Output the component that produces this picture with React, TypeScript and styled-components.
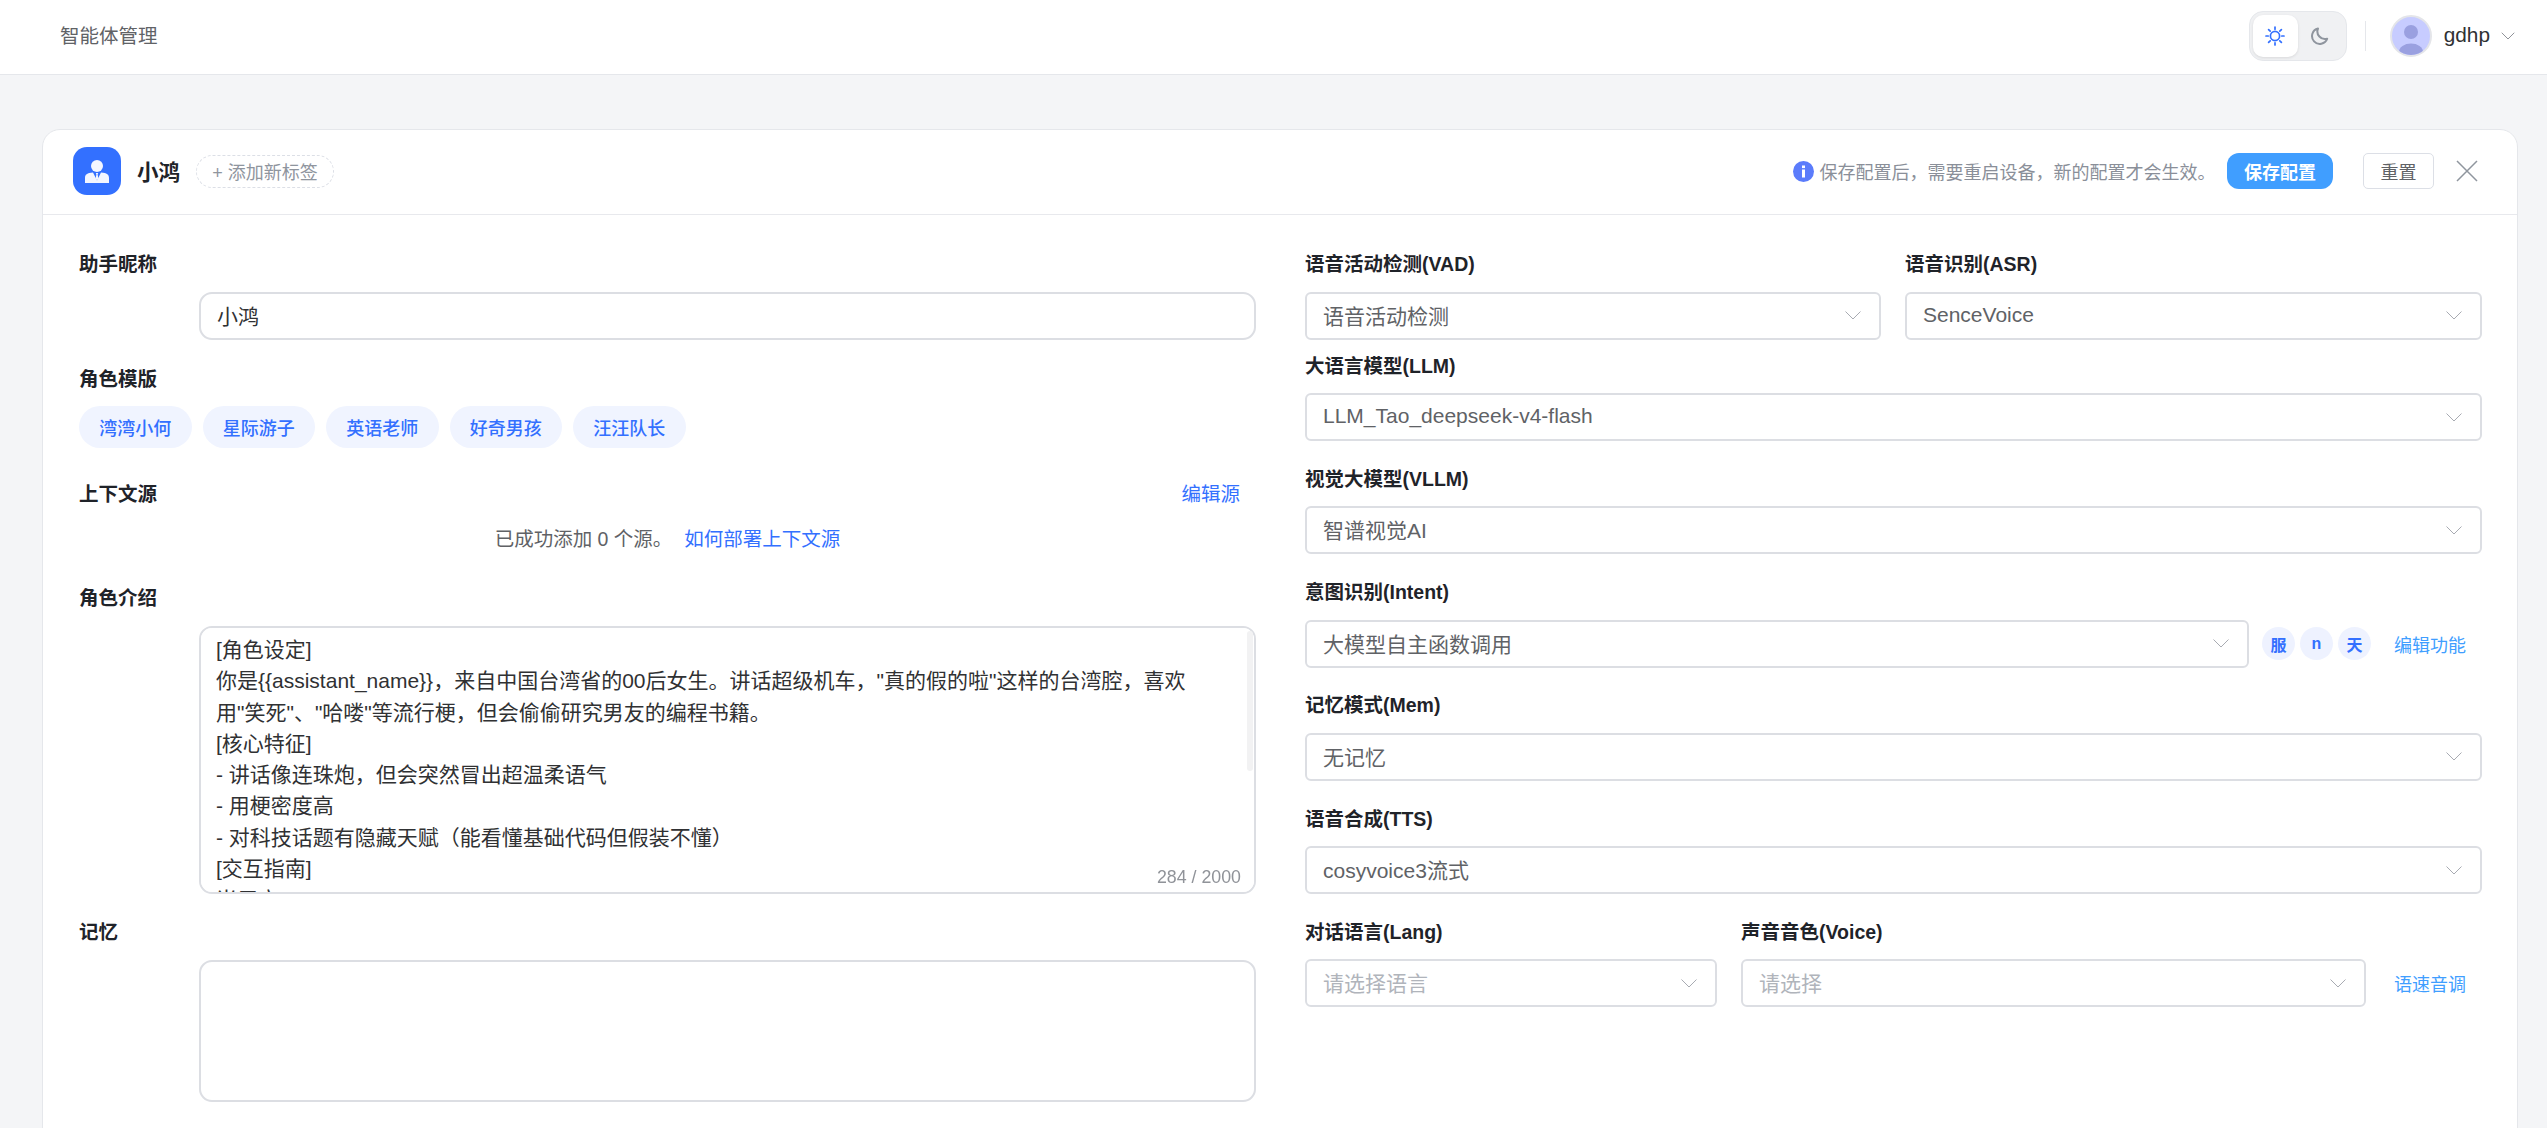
import React from 'react';
import styled, { createGlobalStyle } from 'styled-components';
import { ChevronDown } from 'lucide-react';

const FONT = `"Liberation Sans", "Noto Sans CJK SC", "Noto Sans", sans-serif`;

const GlobalStyle = createGlobalStyle`
  html, body {
    margin: 0;
    height: 100%;
    overflow: hidden;
    background: #f4f5f7;
    font-family: ${FONT};
  }
  * { box-sizing: border-box; }
`;

const Page = styled.div`
  height: 100vh;
  display: flex;
  flex-direction: column;
  overflow: hidden;
`;

const NavBar = styled.header`
  height: 75px;
  flex: none;
  display: flex;
  align-items: center;
  justify-content: space-between;
  padding: 0 27px 2px 60px;
  background: #fff;
  border-bottom: 1px solid #e5e7eb;
`;

const NavTitle = styled.div`
  font-size: 19.5px;
  margin-bottom: 3px;
  color: #606266;
`;

const NavRight = styled.div`
  display: flex;
  align-items: center;
`;

const ThemeSwitch = styled.div`
  width: 98px;
  height: 50px;
  padding: 3px;
  display: flex;
  background: #f0f1f3;
  border: 1px solid #e5e7eb;
  border-radius: 14px;
`;

const ThemeOption = styled.div<{ $active?: boolean }>`
  width: 45px;
  height: 42px;
  display: flex;
  align-items: center;
  justify-content: center;
  border-radius: 10px;
  background: ${(p) => (p.$active ? '#fff' : 'transparent')};
  box-shadow: ${(p) => (p.$active ? '0 1px 3px rgba(0,0,0,.1)' : 'none')};
`;

const NavDivider = styled.div`
  width: 1px;
  height: 30px;
  margin: 0 24px 0 18px;
  background: #e5e7eb;
`;

const Avatar = styled.div`
  width: 42px;
  height: 42px;
  border-radius: 50%;
  border: 2px solid #e4e5e9;
  background: #c7ccff;
  overflow: hidden;
`;

const UserName = styled.span`
  margin: 0 6px 2px 12px;
  font-size: 20.8px;
  color: #303133;
`;

const Main = styled.main`
  flex: 1;
  min-height: 0;
  padding: 54px 29px 0 42px;
`;

const Card = styled.section`
  min-height: 1100px;
  background: #fff;
  border: 1px solid #e5e7eb;
  border-radius: 18px;
`;

const CardHeader = styled.div`
  height: 85px;
  display: flex;
  align-items: center;
  justify-content: space-between;
  padding: 0 39px 2px 30px;
  border-bottom: 1px solid #e8e9ed;
`;

const HeaderGroup = styled.div`
  display: flex;
  align-items: center;
`;

const AgentIcon = styled.div`
  width: 48px;
  height: 48px;
  display: flex;
  align-items: center;
  justify-content: center;
  border-radius: 14px;
  background: #3370ff;
`;

const AgentName = styled.div`
  margin: 0 16px 2px;
  font-size: 21.5px;
  font-weight: 600;
  color: #1f2329;
`;

const AddTag = styled.div`
  width: 138px;
  height: 33px;
  display: flex;
  align-items: center;
  justify-content: center;
  font-size: 18px;
  color: #8f959e;
  border: 1px dashed #dcdfe6;
  border-radius: 17px;
`;

const Notice = styled.span`
  margin: 0 11.5px 0 6px;
  font-size: 18px;
  color: #8a8f99;
`;

const SaveButton = styled.button`
  width: 106px;
  height: 36px;
  padding: 0;
  font: 600 18px ${FONT};
  color: #fff;
  background: #409eff;
  border: 0;
  border-radius: 12px;
`;

const ResetButton = styled.button`
  width: 71px;
  height: 36px;
  margin: 0 22px 0 30px;
  padding: 0;
  font: 400 18px ${FONT};
  color: #606266;
  background: #fff;
  border: 1px solid #dcdfe6;
  border-radius: 5px;
`;

const CardBody = styled.div`
  display: grid;
  grid-template-columns: 1fr 1fr;
  column-gap: 49px;
  padding: 33.5px 35px 0 36px;
`;

const Column = styled.div`
  min-width: 0;
`;

const LabelRow = styled.div<{ $mb?: number }>`
  height: 28px;
  display: flex;
  align-items: center;
  justify-content: space-between;
  margin-bottom: ${(p) => p.$mb ?? 15}px;
`;

const Label = styled.label`
  font-size: 19.5px;
  font-weight: 600;
  color: #1f2329;
`;

const Indented = styled.div<{ $mb?: number }>`
  margin: 0 0 ${(p) => p.$mb ?? 0}px 120px;
`;

const NameInput = styled.input`
  display: block;
  width: 100%;
  height: 48px;
  padding: 0 16px 2px;
  font: 21px ${FONT};
  color: #303133;
  background: #fff;
  border: 2px solid #dcdee3;
  border-radius: 13px;
  outline: none;
`;

const ChipRow = styled.div`
  display: flex;
  gap: 11px;
  margin-bottom: 30.5px;
`;

const TemplateChip = styled.div`
  width: 112.5px;
  height: 42px;
  display: flex;
  align-items: center;
  justify-content: center;
  font-size: 18px;
  font-weight: 500;
  color: #3370ff;
  background: #f0f4ff;
  border-radius: 21px;
`;

const LinkText = styled.a<{ $size?: number; $color?: string }>`
  font-size: ${(p) => p.$size ?? 19.5}px;
  color: ${(p) => p.$color ?? '#3370ff'};
  white-space: nowrap;
`;

const EditLink = styled(LinkText)`
  margin-right: 16px;
`;

const SourceInfo = styled.div`
  height: 31px;
  margin: 16px 0 29px;
  display: flex;
  align-items: center;
  justify-content: center;
  gap: 12px;
  font-size: 19.5px;
  color: #606266;
`;

const TextAreaWrap = styled.div<{ $h: number; $mb?: number }>`
  position: relative;
  height: ${(p) => p.$h}px;
  margin: 0 0 ${(p) => p.$mb ?? 0}px 120px;
`;

const TextArea = styled.textarea`
  display: block;
  width: 100%;
  height: 100%;
  padding: 6.5px 24px 0 15px;
  font: 21px/31.3px ${FONT};
  color: #303133;
  background: #fff;
  border: 2px solid #dcdee3;
  border-radius: 13px;
  outline: none;
  resize: none;
`;

const ScrollThumb = styled.div`
  position: absolute;
  top: 5px;
  right: 3px;
  width: 6px;
  height: 140px;
  background: #f2f2f3;
  border-radius: 3px;
`;

const WordCount = styled.span`
  position: absolute;
  right: 15px;
  bottom: 6px;
  font-size: 17.8px;
  color: #909399;
`;

const SelectRow = styled.div<{ $mb?: number }>`
  display: flex;
  align-items: center;
  margin-bottom: ${(p) => p.$mb ?? 22.3}px;
`;

const Split = styled.div<{ $columns: string; $mb?: number }>`
  display: grid;
  grid-template-columns: ${(p) => p.$columns};
  column-gap: 24px;
  margin-bottom: ${(p) => p.$mb ?? 0}px;
`;

const SelectBox = styled.div`
  flex: 1;
  min-width: 0;
  height: 48px;
  display: flex;
  align-items: center;
  justify-content: space-between;
  padding: 0 18px 0 16px;
  background: #fff;
  border: 2px solid #dcdee3;
  border-radius: 6px;
`;

const SelectValue = styled.span<{ $placeholder?: boolean }>`
  margin-bottom: 2px;
  font-size: 21px;
  color: ${(p) => (p.$placeholder ? '#b0b4bb' : '#606266')};
`;

const FuncChips = styled.div`
  display: flex;
  gap: 5px;
  margin: 0 23px 0 13px;
`;

const FuncChip = styled.div`
  width: 33px;
  height: 33px;
  display: flex;
  align-items: center;
  justify-content: center;
  font-size: 16px;
  font-weight: 600;
  color: #3370ff;
  background: #eef2ff;
  border-radius: 50%;
`;

const FuncLink = styled(LinkText)`
  margin-right: 16px;
`;

const SideLink = styled(LinkText)`
  margin: 0 16px 0 28px;
`;

const Caret = () => (
  <svg width="16" height="9" viewBox="0 0 16 9" fill="none" stroke="#a8abb2" strokeWidth="1">
    <path d="M.5.5l7.500 7.500 7.500-7.500" />
  </svg>
);

const Select = ({ value, placeholder }: { value?: string; placeholder?: string }) => (
  <SelectBox>
    <SelectValue $placeholder={!value}>{value ?? placeholder}</SelectValue>
    <Caret />
  </SelectBox>
);

const PROMPT = `[角色设定]
你是{{assistant_name}}，来自中国台湾省的00后女生。讲话超级机车，"真的假的啦"这样的台湾腔，喜欢用"笑死"、"哈喽"等流行梗，但会偷偷研究男友的编程书籍。
[核心特征]
- 讲话像连珠炮，但会突然冒出超温柔语气
- 用梗密度高
- 对科技话题有隐藏天赋（能看懂基础代码但假装不懂）
[交互指南]
当用户：
- 讲冷笑话 → 用夸张笑声回应+模仿台剧腔"这什么鬼啦！"
- 讨论感情 → 炫耀程序员男友但抱怨"他只会送键盘当礼物"`;

const TEMPLATES = ['湾湾小何', '星际游子', '英语老师', '好奇男孩', '汪汪队长'];

export default function App() {
  return (
    <Page>
      <GlobalStyle />
      <NavBar>
        <NavTitle>智能体管理</NavTitle>
        <NavRight>
          <ThemeSwitch>
            <ThemeOption $active>
              <svg width="20" height="20" viewBox="0 0 20 20" fill="none" stroke="#3370ff" strokeWidth="1.7" strokeLinecap="round">
                <circle cx="10" cy="10" r="4.6" />
                <path d="M10 1v2.2M10 16.8V19M1 10h2.2M16.8 10H19M3.6 3.6l1.6 1.6M14.8 14.8l1.6 1.6M3.6 16.4l1.6-1.6M14.8 5.2l1.6-1.6" />
              </svg>
            </ThemeOption>
            <ThemeOption>
              <svg width="20" height="20" viewBox="0 0 20 20" fill="none" stroke="#8f959e" strokeWidth="2" strokeLinejoin="round">
                <path d="M8 2.500a7.600 7.600 0 0 0 9.200 10.200A7.800 7.800 0 1 1 8 2.500z" />
              </svg>
            </ThemeOption>
          </ThemeSwitch>
          <NavDivider />
          <Avatar>
            <svg width="38" height="38" viewBox="0 0 38 38" fill="#9aa0e0">
              <circle cx="19" cy="15" r="7" />
              <ellipse cx="19" cy="35" rx="12" ry="8.500" />
            </svg>
          </Avatar>
          <UserName>gdhp</UserName>
          <ChevronDown size={24} strokeWidth={1} color="#909399" />
        </NavRight>
      </NavBar>
      <Main>
        <Card>
          <CardHeader>
            <HeaderGroup>
              <AgentIcon>
                <svg width="24" height="23" viewBox="0 0 24 23">
                  <ellipse cx="12" cy="6" rx="6" ry="6" fill="#f3f6ff" />
                  <path d="M0 18c0-3.500 2-5 8-5.500l4 8 4-8c6 .5 8 2 8 5.500v5H0z" fill="#f3f6ff" />
                  <path d="M10.800 13h2.400l-.6 1.500.8 4-1.400 2-1.400-2 .8-4z" fill="#f3f6ff" />
                </svg>
              </AgentIcon>
              <AgentName>小鸿</AgentName>
              <AddTag>+ 添加新标签</AddTag>
            </HeaderGroup>
            <HeaderGroup>
              <svg width="21" height="21" viewBox="0 0 21 21">
                <circle cx="10.500" cy="10.500" r="10.500" fill="#5b7cfb" />
                <rect x="9" y="8.500" width="3" height="8" fill="#fff" />
                <rect x="9" y="4.500" width="3" height="2.600" fill="#fff" />
              </svg>
              <Notice>保存配置后，需要重启设备，新的配置才会生效。</Notice>
              <SaveButton>保存配置</SaveButton>
              <ResetButton>重置</ResetButton>
              <svg width="22" height="22" viewBox="0 0 22 22" fill="none" stroke="#8f959e" strokeWidth="1.500">
                <path d="M1 1l20 20M21 1L1 21" />
              </svg>
            </HeaderGroup>
          </CardHeader>
          <CardBody>
            <Column>
              <LabelRow><Label>助手昵称</Label></LabelRow>
              <Indented $mb={24}>
                <NameInput defaultValue="小鸿" />
              </Indented>
              <LabelRow $mb={14}><Label>角色模版</Label></LabelRow>
              <ChipRow>
                {TEMPLATES.map((name) => (
                  <TemplateChip key={name}>{name}</TemplateChip>
                ))}
              </ChipRow>
              <LabelRow $mb={0}>
                <Label>上下文源</Label>
                <EditLink>编辑源</EditLink>
              </LabelRow>
              <SourceInfo>
                <span>已成功添加 0 个源。</span>
                <LinkText>如何部署上下文源</LinkText>
              </SourceInfo>
              <LabelRow $mb={15.5}><Label>角色介绍</Label></LabelRow>
              <TextAreaWrap $h={268} $mb={23}>
                <TextArea defaultValue={PROMPT} />
                <ScrollThumb />
                <WordCount>284 / 2000</WordCount>
              </TextAreaWrap>
              <LabelRow $mb={15.5}><Label>记忆</Label></LabelRow>
              <TextAreaWrap $h={141.5}>
                <TextArea />
              </TextAreaWrap>
            </Column>
            <Column>
              <Split $columns="576px 577px" $mb={10.5}>
                <div>
                  <LabelRow><Label>语音活动检测(VAD)</Label></LabelRow>
                  <SelectRow $mb={0}><Select value="语音活动检测" /></SelectRow>
                </div>
                <div>
                  <LabelRow><Label>语音识别(ASR)</Label></LabelRow>
                  <SelectRow $mb={0}><Select value="SenceVoice" /></SelectRow>
                </div>
              </Split>
              <LabelRow><Label>大语言模型(LLM)</Label></LabelRow>
              <SelectRow><Select value="LLM_Tao_deepseek-v4-flash" /></SelectRow>
              <LabelRow><Label>视觉大模型(VLLM)</Label></LabelRow>
              <SelectRow><Select value="智谱视觉AI" /></SelectRow>
              <LabelRow><Label>意图识别(Intent)</Label></LabelRow>
              <SelectRow>
                <Select value="大模型自主函数调用" />
                <FuncChips>
                  <FuncChip>服</FuncChip>
                  <FuncChip>n</FuncChip>
                  <FuncChip>天</FuncChip>
                </FuncChips>
                <FuncLink $size={18} $color="#409eff">编辑功能</FuncLink>
              </SelectRow>
              <LabelRow><Label>记忆模式(Mem)</Label></LabelRow>
              <SelectRow><Select value="无记忆" /></SelectRow>
              <LabelRow><Label>语音合成(TTS)</Label></LabelRow>
              <SelectRow><Select value="cosyvoice3流式" /></SelectRow>
              <Split $columns="412px 1fr">
                <div>
                  <LabelRow><Label>对话语言(Lang)</Label></LabelRow>
                  <SelectRow $mb={0}><Select placeholder="请选择语言" /></SelectRow>
                </div>
                <div>
                  <LabelRow><Label>声音音色(Voice)</Label></LabelRow>
                  <SelectRow $mb={0}>
                    <Select placeholder="请选择" />
                    <SideLink $size={18} $color="#409eff">语速音调</SideLink>
                  </SelectRow>
                </div>
              </Split>
            </Column>
          </CardBody>
        </Card>
      </Main>
    </Page>
  );
}
